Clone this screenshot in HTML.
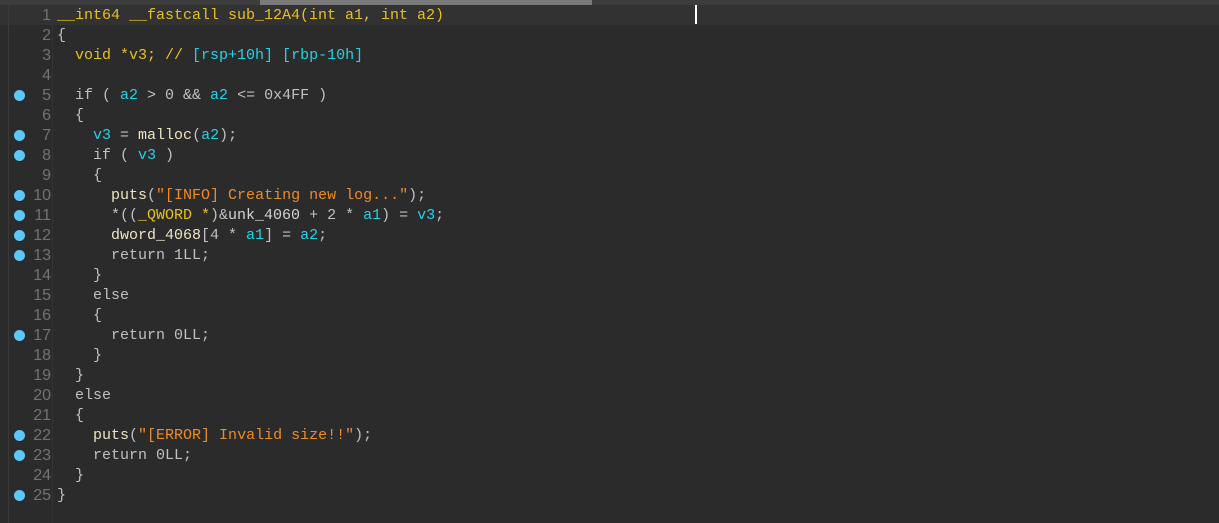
<!DOCTYPE html>
<html><head><style>
body{margin:0;width:1219px;height:523px;background:#2b2b2b;overflow:hidden;position:relative;font-family:"Liberation Mono",monospace;font-size:15px;}
.track{position:absolute;left:0;top:0;width:1219px;height:5px;background:#3c3c3c}
.thumb{position:absolute;left:260px;top:0;width:332px;height:5px;background:#7a7a7a}
.hl{position:absolute;left:0;top:5px;width:1219px;height:20px;background:#323232}
.gut{position:absolute;left:8px;top:5px;width:1px;height:518px;background:#3a3a3a}
.gut2{position:absolute;left:52px;top:5px;width:1px;height:518px;background:#333}
.ln{position:absolute;left:0;width:51px;height:20px;line-height:20px;text-align:right;color:#727272;font-family:"Liberation Sans",sans-serif;font-size:16px}
.dot{position:absolute;left:14px;width:11px;height:11px;border-radius:50%;background:#5cc8fa}
.cd{position:absolute;left:57px;height:20px;line-height:20px;white-space:pre;color:#c0c0c0}
.y{color:#e8c020}.c{color:#22d3e8}.o{color:#f08a24}.p{color:#ece4c4}.w{color:#d4d4d4}
.cur{position:absolute;left:695px;top:5px;width:2px;height:19px;background:#fff}
</style></head><body>
<div class="track"></div><div class="thumb"></div><div class="hl"></div>
<div class="gut"></div><div class="gut2"></div><div class="cur"></div>

<div class="ln" style="top:6px">1</div><div class="cd" style="top:6px"><span class="y">__int64 __fastcall sub_12A4(int a1, int a2)</span></div>
<div class="ln" style="top:26px">2</div><div class="cd" style="top:26px">{</div>
<div class="ln" style="top:46px">3</div><div class="cd" style="top:46px">  <span class="y">void *v3; // </span><span class="c">[rsp+10h] [rbp-10h]</span></div>
<div class="ln" style="top:66px">4</div>
<div class="dot" style="top:90px"></div><div class="ln" style="top:86px">5</div><div class="cd" style="top:86px">  if ( <span class="c">a2</span> &gt; 0 &amp;&amp; <span class="c">a2</span> &lt;= 0x4FF )</div>
<div class="ln" style="top:106px">6</div><div class="cd" style="top:106px">  {</div>
<div class="dot" style="top:130px"></div><div class="ln" style="top:126px">7</div><div class="cd" style="top:126px">    <span class="c">v3</span> = <span class="p">malloc</span>(<span class="c">a2</span>);</div>
<div class="dot" style="top:150px"></div><div class="ln" style="top:146px">8</div><div class="cd" style="top:146px">    if ( <span class="c">v3</span> )</div>
<div class="ln" style="top:166px">9</div><div class="cd" style="top:166px">    {</div>
<div class="dot" style="top:190px"></div><div class="ln" style="top:186px">10</div><div class="cd" style="top:186px">      <span class="p">puts</span>(<span class="o">"[INFO] Creating new log..."</span>);</div>
<div class="dot" style="top:210px"></div><div class="ln" style="top:206px">11</div><div class="cd" style="top:206px">      *((<span class="y">_QWORD *</span>)&amp;<span class="w">unk_4060</span> + 2 * <span class="c">a1</span>) = <span class="c">v3</span>;</div>
<div class="dot" style="top:230px"></div><div class="ln" style="top:226px">12</div><div class="cd" style="top:226px">      <span class="p">dword_4068</span>[4 * <span class="c">a1</span>] = <span class="c">a2</span>;</div>
<div class="dot" style="top:250px"></div><div class="ln" style="top:246px">13</div><div class="cd" style="top:246px">      return 1LL;</div>
<div class="ln" style="top:266px">14</div><div class="cd" style="top:266px">    }</div>
<div class="ln" style="top:286px">15</div><div class="cd" style="top:286px">    else</div>
<div class="ln" style="top:306px">16</div><div class="cd" style="top:306px">    {</div>
<div class="dot" style="top:330px"></div><div class="ln" style="top:326px">17</div><div class="cd" style="top:326px">      return 0LL;</div>
<div class="ln" style="top:346px">18</div><div class="cd" style="top:346px">    }</div>
<div class="ln" style="top:366px">19</div><div class="cd" style="top:366px">  }</div>
<div class="ln" style="top:386px">20</div><div class="cd" style="top:386px">  else</div>
<div class="ln" style="top:406px">21</div><div class="cd" style="top:406px">  {</div>
<div class="dot" style="top:430px"></div><div class="ln" style="top:426px">22</div><div class="cd" style="top:426px">    <span class="p">puts</span>(<span class="o">"[ERROR] Invalid size!!"</span>);</div>
<div class="dot" style="top:450px"></div><div class="ln" style="top:446px">23</div><div class="cd" style="top:446px">    return 0LL;</div>
<div class="ln" style="top:466px">24</div><div class="cd" style="top:466px">  }</div>
<div class="dot" style="top:490px"></div><div class="ln" style="top:486px">25</div><div class="cd" style="top:486px">}</div>
</body></html>
